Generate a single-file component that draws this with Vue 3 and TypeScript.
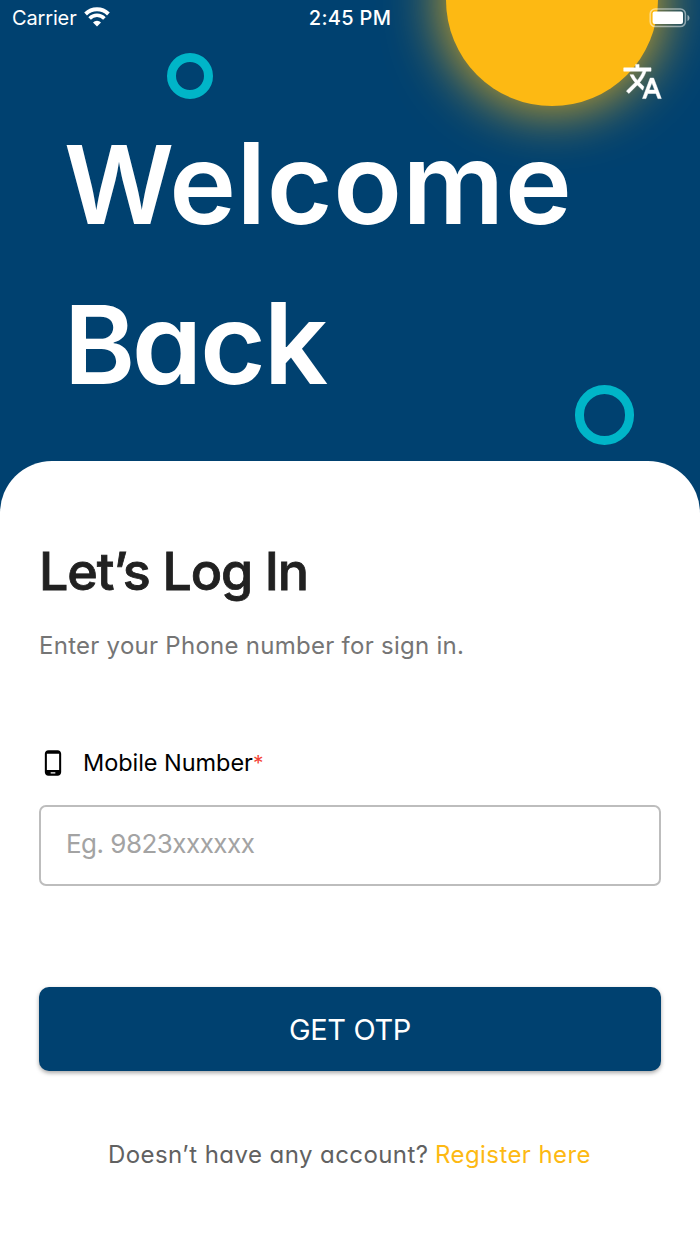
<script setup lang="ts">
import { ref } from 'vue'

const phone = ref<string>('')
const titleLines: string[] = ['Welcome', 'Back']
</script>

<template>
  <main class="screen">
    <div class="sun"></div>
    <div class="ring ring-small"></div>
    <div class="ring ring-large"></div>

    <header class="status">
      <div class="carrier">
        <span class="carrier-name">Carrier</span>
        <svg class="wifi" viewBox="0 0 26 20" width="26" height="20">
          <path d="M1.6 7a16.2 16.2 0 0 1 22.8 0" fill="none" stroke="#fff" stroke-width="3.9" />
          <path d="M5.6 11.4a10.4 10.4 0 0 1 14.8 0" fill="none" stroke="#fff" stroke-width="3.6" />
          <path d="M9 15.4a5.6 5.6 0 0 1 8 0l-4 4z" fill="#fff" />
        </svg>
      </div>
      <span class="clock">2:45 PM</span>
      <svg class="battery" viewBox="0 0 42 20" width="42" height="20">
        <rect x="1.2" y="1" width="35.2" height="17.6" rx="5" fill="none" stroke="#fff" stroke-opacity=".5" stroke-width="1.5" />
        <rect x="3.6" y="3.5" width="30.4" height="12.4" rx="2" fill="#fff" />
        <path d="M38.5 7c2.6 1.2 2.6 4.8 0 6z" fill="#fff" fill-opacity=".55" />
      </svg>
    </header>

    <section class="hero">
      <button class="language" aria-label="Language">
        <svg viewBox="0 0 24 24" width="41" height="41" fill="#fff" stroke="#fff" stroke-width=".3">
          <path d="M12.87 15.07l-2.54-2.51.03-.03c1.74-1.94 2.98-4.17 3.71-6.53H17V4h-7V2H8v2H1v1.99h11.17C11.5 7.92 10.44 9.75 9 11.35 8.07 10.32 7.3 9.19 6.69 8h-2c.73 1.63 1.73 3.17 2.98 4.56l-5.09 5.02L4 19l5-5 3.11 3.11.76-2.04zM18.5 10h-2L12 22h2l1.12-3h4.75L21 22h2l-4.5-12zm-2.62 7l1.62-4.33L19.12 17h-3.24z" />
        </svg>
      </button>
      <h1 class="title">
        <span v-for="(line, i) in titleLines" :key="line" :class="['line', `line-${i}`]">{{ line }}</span>
      </h1>
    </section>

    <section class="card">
      <h2 class="heading">Let’s Log In</h2>
      <p class="hint">Enter your Phone number for sign in.</p>

      <label class="label" for="mobile">
        <svg viewBox="0 0 24 24" width="28" height="28" fill="#000">
          <path d="M16 1H8C6.34 1 5 2.34 5 4v16c0 1.66 1.34 3 3 3h8c1.66 0 3-1.34 3-3V4c0-1.66-1.34-3-3-3zm-2 20h-4v-1h4v1zm3.25-3H6.75V4h10.5v14z" />
        </svg>
        <span class="label-text">Mobile Number<span class="required">*</span></span>
      </label>
      <input id="mobile" v-model="phone" class="field" type="tel" placeholder="Eg. 9823xxxxxx" />

      <button class="submit">GET OTP</button>

      <p class="footer">
        <span class="question">Doesn’t have any account?</span>
        <a class="register">Register here</a>
      </p>
    </section>
  </main>
</template>

<style>
body {
  margin: 0;
}
</style>

<style scoped>
.screen {
  position: relative;
  width: 700px;
  height: 1244px;
  overflow: hidden;
  display: flex;
  flex-direction: column;
  background: #004170;
  font-family: Inter, "Liberation Sans", sans-serif;
  font-feature-settings: "cv11";
  white-space: nowrap;
}

.sun {
  position: absolute;
  left: 446px;
  top: -106px;
  width: 212px;
  height: 212px;
  border-radius: 50%;
  background: #fdb913;
  box-shadow: 0 0 60px #fdb913;
}

.ring {
  position: absolute;
  box-sizing: border-box;
  border: 9.4px solid #00b5c8;
  border-radius: 50%;
}

.ring-small {
  left: 167px;
  top: 53px;
  width: 46px;
  height: 46px;
}

.ring-large {
  left: 574.5px;
  top: 385px;
  width: 59.5px;
  height: 59.5px;
}

.status {
  position: relative;
  display: grid;
  grid-template-columns: 1fr auto 1fr;
  align-items: center;
  height: 36px;
  padding: 0 9px 0 12px;
  color: #fff;
}

.carrier {
  display: flex;
  align-items: center;
  gap: 7px;
}

.carrier-name {
  font-size: 20px;
  letter-spacing: -0.15px;
  font-feature-settings: normal;
}

.wifi {
  margin-top: -3px;
}

.clock {
  margin-right: 3px;
  font-size: 20px;
  font-weight: 500;
  letter-spacing: 0.3px;
}

.battery {
  justify-self: end;
  margin-top: -1px;
}

.hero {
  position: relative;
  height: 425px;
  display: flex;
  flex-direction: column;
}

.language {
  align-self: flex-end;
  display: flex;
  margin: 25px 37.5px 0 0;
  padding: 0;
  border: 0;
  background: none;
}

.title {
  margin: 2px 0 0 64px;
  color: #fff;
  font-size: 113px;
  font-weight: 600;
  line-height: 159px;
}

.line {
  display: block;
}

.line::first-letter {
  font-size: 108px;
}

.line-0 {
  letter-spacing: 0.6px;
}

.line-0::first-letter {
  letter-spacing: -5px;
}

.line-1 {
  letter-spacing: -2.2px;
}

.line-1::first-letter {
  letter-spacing: -3.5px;
}

.card {
  position: relative;
  flex: 1;
  display: flex;
  flex-direction: column;
  padding: 80px 39px 0;
  border-radius: 52px 52px 0 0;
  background: #fff;
}

.heading {
  margin: 0;
  color: #212121;
  font-size: 52px;
  font-weight: 500;
  line-height: 61px;
  letter-spacing: -1.15px;
  -webkit-text-stroke: 0.8px #212121;
}

.hint {
  margin: 29px 0 0;
  color: #757575;
  font-size: 24px;
  line-height: 30px;
  letter-spacing: 0.27px;
}

.label {
  display: flex;
  align-items: center;
  gap: 16px;
  height: 30px;
  margin-top: 87px;
  color: #000;
}

.label-text {
  margin-top: -2px;
  font-size: 23.5px;
  letter-spacing: -0.05px;
}

.required {
  color: #f44336;
  font-size: 21px;
}

.field {
  box-sizing: border-box;
  height: 81px;
  margin-top: 26.5px;
  padding: 0 25px 3px;
  border: 2px solid #bdbdbd;
  border-radius: 7px;
  background: #fff;
  color: #212121;
  font: inherit;
  font-size: 26px;
  letter-spacing: -0.52px;
}

.field::placeholder {
  color: #a3a3a3;
  opacity: 1;
}

.submit {
  height: 84px;
  margin-top: 101.5px;
  padding: 0;
  border: 0;
  border-radius: 10px;
  background: #004170;
  box-shadow: 0 2px 4px rgba(0, 0, 0, 0.35);
  color: #fff;
  font: inherit;
  font-size: 29px;
  letter-spacing: -0.35px;
}

.footer {
  display: flex;
  gap: 6.5px;
  margin: 69px 0 0 69px;
  font-size: 24px;
  line-height: 30px;
  letter-spacing: 0.43px;
}

.question {
  color: #616161;
}

.register {
  color: #fdb913;
}
</style>
